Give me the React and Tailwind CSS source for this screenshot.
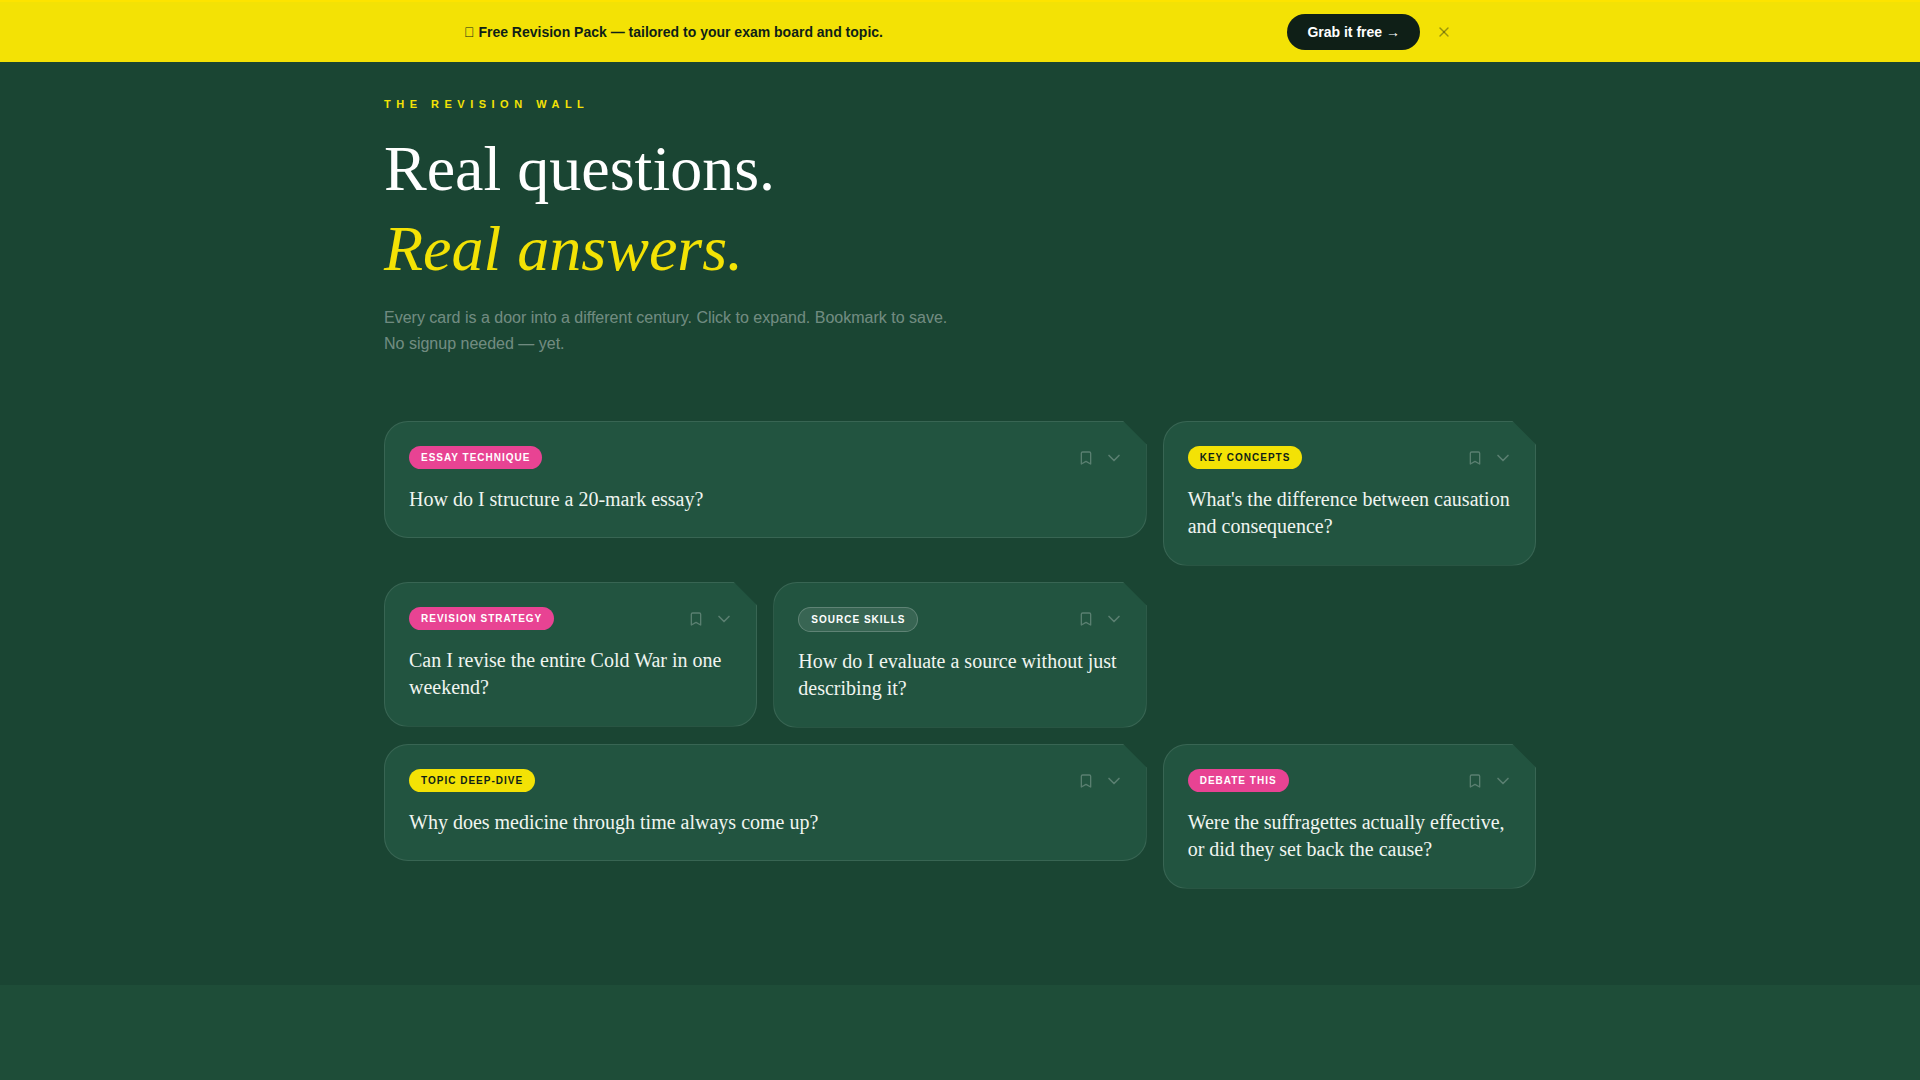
import { Bookmark, ChevronDown, X } from "lucide-react";

const cards = [
  { tag: "Essay Technique", tone: "pink", wide: true, question: "How do I structure a 20-mark essay?" },
  { tag: "Key Concepts", tone: "yellow", question: "What's the difference between causation and consequence?" },
  { tag: "Revision Strategy", tone: "pink", question: "Can I revise the entire Cold War in one weekend?" },
  { tag: "Source Skills", tone: "ghost", question: "How do I evaluate a source without just describing it?" },
  { tag: "Topic Deep-Dive", tone: "yellow", wide: true, question: "Why does medicine through time always come up?" },
  { tag: "Debate This", tone: "pink", question: "Were the suffragettes actually effective, or did they set back the cause?" },
];

const tones = {
  pink: "bg-[#e84393] text-white",
  yellow: "bg-[#f3e205] text-[#0f1f17]",
  ghost: "border border-white/20 bg-white/10 text-white",
};

function Card({ tag, tone, wide, question }) {
  return (
    <div
      className={`rounded-[24px] border border-white/10 bg-[#225440] p-6 [clip-path:polygon(0_0,calc(100%-24px)_0,100%_24px,100%_100%,0_100%)] ${
        wide ? "col-span-2" : ""
      }`}
    >
      <div className="flex min-h-6 items-center justify-between">
        <span className={`rounded-full px-3 py-1 text-[10px] font-bold uppercase tracking-[0.1em] ${tones[tone]}`}>
          {tag}
        </span>
        <div className="-mr-0.5 flex items-center gap-2.5 text-white/25">
          <Bookmark size={16} />
          <ChevronDown size={20} />
        </div>
      </div>
      <h3 className="mt-4 font-['Liberation_Serif',serif] text-[20px] font-normal leading-snug text-[#f0f5f0]">
        {question}
      </h3>
    </div>
  );
}

export default function App() {
  return (
    <div className="min-h-screen bg-[#1e4d38] font-['Liberation_Sans',sans-serif]">
      <div className="h-[62px] border-t-2 border-[#fde400] bg-[#f3e205]">
        <div className="mx-auto flex h-full max-w-5xl items-center justify-between px-4">
          <p className="text-sm font-bold text-[#0f1f17]">{"\uE0FF"} Free Revision Pack — tailored to your exam board and topic.</p>
          <div className="mr-1 flex items-center gap-4">
            <button className="h-9 rounded-full bg-[#0f1f17] px-5 text-sm font-bold text-white">Grab it free →</button>
            <X size={16} className="text-[#0f1f17]/40" />
          </div>
        </div>
      </div>

      <section className="bg-[#1a4533] pb-24 pt-[34px]">
        <div className="mx-auto max-w-6xl">
          <p className="text-[11px] font-bold uppercase tracking-[0.5em] text-[#f3e205]">The Revision Wall</p>
          <h1 className="mt-4 font-['Liberation_Serif',serif] text-[64px] font-normal leading-[80px] text-white">
            Real questions.
            <br />
            <em className="text-[#f3e205]">Real answers.</em>
          </h1>
          <p className="mt-4 text-base leading-[26px] text-white/40">
            Every card is a door into a different century. Click to expand. Bookmark to save.
            <br />
            No signup needed — yet.
          </p>
          <div className="mt-16 grid grid-cols-3 items-start gap-4">
            {cards.map((card) => (
              <Card key={card.tag} {...card} />
            ))}
          </div>
        </div>
      </section>
    </div>
  );
}
